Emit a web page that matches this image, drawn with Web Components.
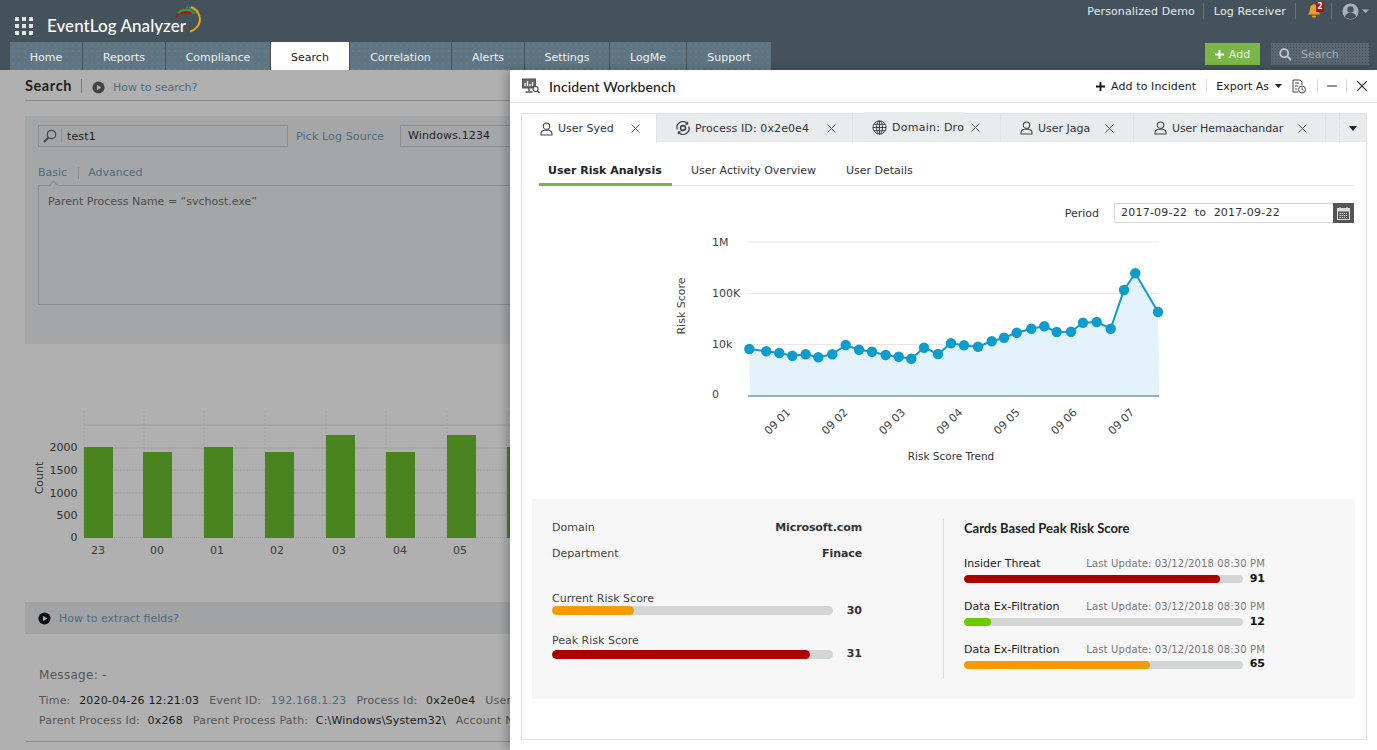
<!DOCTYPE html>
<html><head><meta charset="utf-8"><title>EventLog Analyzer</title>
<style>
html,body{margin:0;padding:0;width:1377px;height:750px;overflow:hidden;background:#b0b0b0;font:11px "DejaVu Sans",sans-serif;color:#333}
</style></head><body>
<x-app>
  <x-topbar></x-topbar>
  <x-search-page></x-search-page>
  <x-drawer>
    <x-tabset slot="tabs">
      <x-doc-tab active icon="user" label="User Syed" style="--w:135px;--pl:18px;--cl:17px"></x-doc-tab>
      <x-doc-tab icon="proc" label="Process ID: 0x2e0e4" style="--w:196px;--pl:19px;--cl:18px;--ls:.1px"></x-doc-tab>
      <x-doc-tab icon="globe" label="Domain: Dro" raised style="--w:148px;--pl:19px;--cl:7px;--ls:.25px"></x-doc-tab>
      <x-doc-tab icon="user" label="User Jaga" style="--w:133px;--pl:19px;--cl:15px"></x-doc-tab>
      <x-doc-tab icon="user" label="User Hemaachandar" style="--w:192px;--pl:20px;--cl:15px;--ls:-.1px"></x-doc-tab>
    </x-tabset>
    <x-subtabs></x-subtabs>
    <x-period></x-period>
    <x-trend></x-trend>
    <x-summary>
      <div slot="left">
        <x-kv k="Domain" v="Microsoft.com"></x-kv>
        <x-kv k="Department" v="Finace"></x-kv>
        <x-score label="Current Risk Score" value="30" pct="29.2" color="#f39c00" style="--top:31px;--gap:0px;--h:9px;--tw:281px;--vw:29px"></x-score>
        <x-score label="Peak Risk Score" value="31" pct="91.8" color="#ad0000" style="--top:19px;--gap:2px;--h:9px;--tw:281px;--vw:29px;--vt:-2px"></x-score>
      </div>
      <div slot="right">
        <x-card-head>Cards Based Peak Risk Score</x-card-head>
        <x-score label="Insider Threat" update="Last Update: 03/12/2018 08:30 PM" value="91" pct="91.6" color="#ad0000" strong style="--top:20px;--gap:4px;--h:8px;--tw:279px;--vw:22px;--vt:-2px"></x-score>
        <x-score label="Data Ex-Filtration" update="Last Update: 03/12/2018 08:30 PM" value="12" pct="9.7" color="#6bcb00" strong style="--top:17px;--gap:4px;--h:8px;--tw:279px;--vw:22px;--vt:-2px"></x-score>
        <x-score label="Data Ex-Filtration" update="Last Update: 03/12/2018 08:30 PM" value="65" pct="66.6" color="#f39c00" strong style="--top:17px;--gap:4px;--h:8px;--tw:279px;--vw:22px;--vt:-4px"></x-score>
      </div>
    </x-summary>
  </x-drawer>
</x-app>
<script>
function el(name, css, html){
  customElements.define(name, class extends HTMLElement{
    connectedCallback(){
      if(this.shadowRoot) return;
      const r=this.attachShadow({mode:'open'});
      const h=typeof html==='function'?html(this):html;
      r.innerHTML='<style>'+css+'</style>'+h;
    }
  });
}
const ICONS={
 user:'<svg width="13" height="14" viewBox="0 0 13 14" fill="none" stroke="#444" stroke-width="1.1"><circle cx="6.5" cy="4.2" r="3.2"/><path d="M1 13v-1.2c0-2 1.6-3.4 3.6-3.6h3.8c2 .2 3.6 1.6 3.6 3.6V13z"/></svg>',
 proc:'<svg width="14" height="14" viewBox="0 0 14 14" fill="none" stroke="#444" stroke-width="1.2"><path d="M1.4 8.5A5.8 5.8 0 0 1 11.2 2.6M12.6 5.5A5.8 5.8 0 0 1 2.8 11.4"/><path d="M11.6 .8v2.3H9.3M2.4 13.2v-2.3h2.3"/><circle cx="7" cy="7" r="2.4" stroke-width="1.6"/></svg>',
 globe:'<svg width="15" height="15" viewBox="0 0 15 15" fill="none" stroke="#444" stroke-width="1"><circle cx="7.5" cy="7.5" r="6.6"/><ellipse cx="7.5" cy="7.5" rx="3" ry="6.6"/><path d="M7.5 1v13M1 7.5h13M1.9 4.3h11.2M1.9 10.7h11.2"/></svg>'
};
const PLAY=(bg,s)=>`<svg width="${s}" height="${s}" viewBox="0 0 14 14"><circle cx="7" cy="7" r="6.5" fill="${bg}"/><path d="M5.3 4v6L10 7z" fill="#b0b0b0"/></svg>`;

el('x-app',':host{display:block;position:relative;width:1377px;height:750px;overflow:hidden}','<slot></slot>');

el('x-topbar',`
:host{display:block;background:#44525c;height:70px;position:relative;color:#fff}
.top{display:flex;height:42px;box-sizing:border-box;align-items:flex-start}
.grid{display:grid;grid-template-columns:repeat(3,4px);grid-auto-rows:4px;gap:3px;margin:17px 0 0 15px}
.grid i{background:#e3e5e6}
.logo{font:500 17px Lato,sans-serif;margin:13px 0 0 14px;color:#fff;position:relative;line-height:26px;white-space:nowrap;letter-spacing:.05px}
.arc{margin:6px 0 0 -11px;flex:none}
.links{margin-left:auto;display:flex;align-items:center;height:22px;font-size:11px;color:#e6e9ea;padding-right:8px;letter-spacing:.12px}
.links span{white-space:nowrap}
.sep{width:1px;height:16px;background:#66737c;margin:0 10px 0 9px}
.bell{position:relative;width:17px;height:16px;margin:0 -2px 0 1px}
.bell b{position:absolute;left:9px;top:-1px;width:8px;height:10px;background:#b00d0d;color:#fff;font:700 8px/10px "DejaVu Sans",sans-serif;text-align:center}
.row2{display:flex;height:28px;padding-left:10px;gap:1px;align-items:stretch}
.tab{background:#5f7582 radial-gradient(#6c808c 0.6px,transparent .8px) 0 0/6px 6px;color:#eef1f2;font-size:11px;line-height:31px;white-space:nowrap;text-align:center;flex:none}
.tab.on{background:#fff;color:#222}
.btn{margin-left:auto;background:#7ab648;width:55px;height:22px;margin-top:1px;display:flex;align-items:center;justify-content:center;gap:5px;color:#eaf3e0;font-size:11px}
.sb{margin:1px 8px 0 10px;width:98px;height:22px;background:#5a6770 radial-gradient(#46525b .7px,transparent .9px) 0 0/3px 3px;display:flex;align-items:center;color:#a4adb2;font-size:11px;box-sizing:border-box;padding-left:8px;gap:9px}
`,`
<div class="top">
  <div class="grid">${'<i></i>'.repeat(9)}</div>
  <div class="logo">EventLog Analyzer</div>
  <svg class="arc" width="28" height="27" viewBox="0 0 28 27" fill="none">
    <path d="M1 11C4 7 10 5.500 16 7" stroke="#b01010" stroke-width="2"/>
    <path d="M3 7C8 2.500 15 2.500 20 8" stroke="#4c9a2a" stroke-width="1.800"/>
    <path d="M11 1.500C16 1 20 4 23 8" stroke="#2f8fc0" stroke-width="1.600" stroke-dasharray="2 1"/>
    <path d="M16 1C24 4 28 14 22 21C20 23.500 18 25 15 25.500" stroke="#e8a50c" stroke-width="2"/>
  </svg>
  <div class="links">
    <span>Personalized Demo</span><i class="sep" style="margin-left:8px"></i><span>Log Receiver</span><i class="sep"></i>
    <div class="bell"><svg width="14" height="16" viewBox="0 0 14 16"><path d="M7 1.500c3 0 4 2.500 4 5 0 2.500 1 3.500 2.500 5H.5C2 10 3 9 3 6.500s1-5 4-5z" fill="#f0a020"/><rect x="5" y="12.500" width="4" height="2" rx="1" fill="#f0a020"/></svg><b>2</b></div>
    <i class="sep"></i>
    <svg width="27" height="17" viewBox="0 0 27 17"><circle cx="8.500" cy="8.500" r="8" fill="#aab0b4"/><circle cx="8.500" cy="6.500" r="3.200" fill="#44525c"/><path d="M2.800 14c.6-3 3-4.200 5.700-4.200s5.100 1.200 5.700 4.200c-3 2.600-8.400 2.600-11.400 0z" fill="#44525c"/><path d="M20 6.500h7L23.500 10z" fill="#aab0b4"/></svg>
  </div>
</div>
<div class="row2">
  <div class="tab" style="width:72px">Home</div><div class="tab" style="width:82px">Reports</div><div class="tab" style="width:104px">Compliance</div><div class="tab on" style="width:78px">Search</div><div class="tab" style="width:101px">Correlation</div><div class="tab" style="width:72px">Alerts</div><div class="tab" style="width:84px">Settings</div><div class="tab" style="width:76px">LogMe</div><div class="tab" style="width:84px">Support</div>
  <div class="btn"><svg width="9" height="9" viewBox="0 0 9 9"><path d="M3.500 0h2v3.500H9v2H5.500V9h-2V5.500H0v-2h3.500z" fill="#fff"/></svg>Add</div>
  <div class="sb"><svg width="13" height="13" viewBox="0 0 13 13" fill="none" stroke="#c5cbce" stroke-width="1.800"><circle cx="5.200" cy="5.200" r="4"/><path d="M8.200 8.200 12 12"/></svg>Search</div>
</div>`);

const barSvg=(()=>{
  const tops=[447,452,447,452,435,452,435,447], xs=[84,143,204,265,326,386,447,507];
  const labs=['23','00','01','02','03','04','05'];
  let s='<svg width="510" height="170" viewBox="0 400 510 170" style="display:block;margin-left:-25px">';
  [425,448,470,493,515].forEach(y=>s+=`<path d="M84 ${y}H510" stroke="#9c9c9c" stroke-dasharray="${y==425?'none':'2 1'}"/>`);
  [84,144,204,265,326,386,447,507].forEach(x=>s+=`<path d="M${x} 411V537" stroke="#a2a2a2" stroke-dasharray="2 2"/>`);
  s+='<path d="M84 537.500H510" stroke="#999" stroke-dasharray="1 1"/>';
  tops.forEach((t,i)=>s+=`<rect x="${xs[i]}" y="${t}" width="29" height="${538-t}" fill="#4a8421"/>`);
  [['2000',451],['1500',474],['1000',497],['500',519],['0',541]].forEach(a=>s+=`<text x="77.500" y="${a[1]}" text-anchor="end" font-size="11" fill="#2e2e2e" font-family="DejaVu Sans">${a[0]}</text>`);
  s+='<text transform="translate(43 478) rotate(-90)" text-anchor="middle" font-size="11" fill="#3a3a3a" font-family="DejaVu Sans">Count</text>';
  [98,157,217,277,339,400,460].forEach((x,i)=>s+=`<text x="${x}" y="554" text-anchor="middle" font-size="11" fill="#3a3a3a" font-family="DejaVu Sans">${labs[i]}</text>`);
  return s+'</svg>';
})();

el('x-search-page',`
:host{display:block;height:680px;padding:0 0 0 25px;color:#222;overflow:hidden}
a{color:#4c6b7d}
.head{height:31px;box-sizing:border-box;border-bottom:1px solid #8b8b8b;display:flex;align-items:center;padding-top:1px}
.head b{font:700 14.500px Lato,sans-serif;color:#1d1d1d;letter-spacing:.6px;width:47px;white-space:nowrap}
.head i{width:1px;height:14px;background:#777;margin:0 10px 0 9px}
.head svg{margin-top:4px}
.head a{margin:4px 0 0 8px}
.panel{margin-top:15px;background:#a5a6a8;height:228px;box-sizing:border-box;padding:9px 13px;position:relative}
.row{display:flex;height:22px;align-items:center;letter-spacing:.13px}
.input{width:250px;height:22px;box-sizing:border-box;border:1px solid #8c8c8c;display:flex;align-items:center;color:#1d1d1d}
.input svg{margin:0 4px 0 4px}
.input i{width:1px;height:14px;background:#949494;margin-right:5px}
.row a{margin-left:8px;width:104px;white-space:nowrap}
.sel{width:200px;height:22px;box-sizing:border-box;border:1px solid #8c8c8c;padding-left:7px;line-height:20px;color:#1d1d1d}
.sub{display:flex;margin-top:19px;height:14px;line-height:14px;align-items:center}
.sub i{width:1px;height:12px;background:#8c8c8c;margin:0 9px 0 11px}
.area{margin-top:5px;height:120px;box-sizing:border-box;border:1px solid #8c8c8c;padding:9px;color:#4c4c4c;position:relative}
.area::before{content:"";position:absolute;left:11px;top:-4px;width:6px;height:6px;background:#a5a6a8;border:1px solid #8c8c8c;border-right:0;border-bottom:0;transform:rotate(45deg)}
.chart{margin-top:56px}
.how{margin-top:32px;height:32px;background:#a2a3a5;display:flex;align-items:center;padding-left:13px;gap:8px}
.msg{margin-top:34px;margin-left:14px;color:#555;font-size:12px;line-height:15px;letter-spacing:.3px}
.kv{margin-left:14px;white-space:nowrap;color:#555;line-height:14px;letter-spacing:.17px}
.kv b{font-weight:400;color:#1a1a1a;margin:0 10px 0 var(--m)}
.kv a{margin:0 10px 0 6px}
hr{margin:13px 0 0 1px;border:0;border-top:1px solid #8a8a8a}
`,`
<div class="head"><b>Search</b><i></i>${PLAY('#444',13)}<a>How to search?</a></div>
<div class="panel">
  <div class="row">
    <div class="input"><svg width="14" height="14" viewBox="0 0 14 14" fill="none" stroke="#4a4a4a" stroke-width="1.300"><circle cx="8.500" cy="5.500" r="4.200"/><path d="M5.500 8.500 1 13" stroke-width="2"/></svg><i></i>test1</div>
    <a>Pick Log Source</a><div class="sel">Windows.1234</div>
  </div>
  <div class="sub"><a>Basic</a><i></i><a>Advanced</a></div>
  <div class="area">Parent Process Name = “svchost.exe”</div>
</div>
<div class="chart">${barSvg}</div>
<div class="how">${PLAY('#0c0c0c',13)}<a>How to extract fields?</a></div>
<div class="msg">Message: -</div>
<div class="kv" style="margin-top:11px;--m:5px">Time: <b>2020-04-26 12:21:03</b>Event ID: <a>192.168.1.23</a>Process Id: <b>0x2e0e4</b>User Name</div>
<div class="kv" style="margin-top:6px;--m:4px">Parent Process Id: <b>0x268</b>Parent Process Path: <b>C:\\Windows\\System32\\</b>Account Name</div>
<hr>`);

el('x-drawer',`
:host{display:flex;flex-direction:column;position:absolute;left:510px;top:70px;width:867px;height:680px;background:#fff;box-shadow:-4px 0 8px rgba(0,0,0,.22);box-sizing:border-box;color:#333}
.hdr{height:33px;flex:none;box-sizing:border-box;border-bottom:1px solid #e2e2e2;display:flex;align-items:center;padding:0 10px 0 12px;color:#222}
.hdr h1{font:500 14px Lato,sans-serif;margin:0 0 0 9px;color:#222;letter-spacing:.1px}
.r{margin-left:auto;display:flex;align-items:center;font-size:11px}
.s{width:1px;height:14px;background:#ddd;margin:0 10px 0 9px}
.box{margin:10px 10px 10px 11px;border:1px solid #e2e2e2;flex:1;display:flex;flex-direction:column;min-height:0}
.body{padding:0 12px 0 17px;display:block}
`,`
<div class="hdr">
  <svg width="18" height="16" viewBox="0 0 18 16"><rect x=".500" y="1" width="13" height="9" fill="#666" stroke="#555"/><path d="M3 8V5M5.500 8V3M8 8V6M10.500 8V4" stroke="#eee" stroke-width="1.400"/><path d="M7 10v3M3.500 14h7" stroke="#555" stroke-width="1.500"/><circle cx="13.500" cy="11" r="2.500" fill="#fff" stroke="#444" stroke-width="1.100"/><path d="M15.300 12.800 17.500 15" stroke="#444" stroke-width="1.300"/></svg>
  <h1>Incident Workbench</h1>
  <div class="r">
    <svg width="9" height="9" viewBox="0 0 9 9" style="margin-right:6px"><path d="M3.600 0h1.800v3.600H9v1.800H5.400V9H3.600V5.400H0V3.600h3.600z" fill="#111"/></svg><span style="letter-spacing:.1px">Add to Incident</span>
    <i class="s" style="margin:0 9px 0 10px"></i>Export As
    <svg width="7" height="4" viewBox="0 0 7 4" style="margin:0 10px 0 6px"><path d="M0 0h7L3.500 4z" fill="#222"/></svg>
    <svg width="14" height="15" viewBox="0 0 14 15" fill="none" stroke="#444" stroke-width="1"><path d="M6 13H1V1h7l2 2v3"/><path d="M3 4h4M3 7h3M3 10h2"/><circle cx="10" cy="10.500" r="3.500"/><path d="M10 8.500v2l1.500 1"/></svg>
    <i class="s" style="margin:0 9px 0 11px"></i>
    <svg width="10" height="2" viewBox="0 0 10 2"><path d="M0 1h10" stroke="#222"/></svg>
    <i class="s"></i>
    <svg width="10" height="10" viewBox="0 0 10 10"><path d="M.300.300l9.400 9.400M9.700.300.300 9.700" stroke="#222" stroke-width="1.100"/></svg>
  </div>
</div>
<div class="box"><slot name="tabs"></slot><div class="body"><slot></slot></div></div>`);

el('x-tabset',`
:host{display:flex;height:28px;flex:none;background:#e9eced;position:relative}
.more{position:absolute;right:0;top:0;width:27px;height:28px;display:flex;align-items:center;justify-content:center;border-left:1px dotted #d4d8da;box-sizing:border-box}
`,`<slot></slot><div class="more"><svg width="8" height="5" viewBox="0 0 8 5"><path d="M0 0h8L4 5z" fill="#222"/></svg></div>`);

el('x-doc-tab',`
:host{display:flex;align-items:center;flex:none;width:var(--w);box-sizing:border-box;padding-left:var(--pl);border-right:1px solid #dfe3e4;font-size:11px;color:#333;position:relative;white-space:nowrap;letter-spacing:var(--ls,0)}
:host([active]){background:#fff;border-right:1px solid #e2e2e2;height:29px;z-index:1}
:host([raised]){padding-bottom:2px}
:host([raised])::before{content:"";position:absolute;left:10px;top:-2px;width:102px;height:2px;background:#e9eced;border-radius:2px 2px 0 0}
svg.ic{flex:none;display:block;margin-right:5px}
span{display:block}
.x{margin-left:var(--cl);flex:none}
`,t=>`<span style="display:contents">${ICONS[t.getAttribute('icon')].replace('<svg','<svg class="ic"')}</span><span>${t.getAttribute('label')}</span><svg class="x" width="9" height="9" viewBox="0 0 9 9"><path d="M.500.500l8 8M8.500.500l-8 8" stroke="#555"/></svg>`);

el('x-subtabs',`
:host{display:flex;height:44px;box-sizing:border-box;border-bottom:1px solid #e6e6e6;align-items:flex-end;font-size:11px;color:#333}
div{padding:0 0 5px;line-height:14px;white-space:nowrap;margin-bottom:-1px;border-bottom:3px solid transparent}
.on{font-weight:700;color:#222;border-bottom-color:#7ab648;padding:0 10px 5px 9px;width:114px}
`,`<div class="on">User Risk Analysis</div><div style="margin-left:19px">User Activity Overview</div><div style="margin-left:30px">User Details</div>`);

el('x-period',`
:host{display:flex;justify-content:flex-end;align-items:center;margin-top:17px;height:20px;font-size:11px;color:#333}
.d{margin-left:15px;width:219px;height:20px;box-sizing:border-box;border:1px solid #d6d6d6;border-right:0;padding-left:6px;line-height:18px;color:#333;white-space:pre;letter-spacing:.23px}
.c{width:21px;height:20px;background:#555;display:flex;align-items:center;justify-content:center}
`,`Period<div class="d">2017-09-22  to  2017-09-22</div><div class="c"><svg width="13" height="13" viewBox="0 0 13 13"><rect x=".500" y="1.500" width="12" height="11" fill="none" stroke="#ddd"/><path d="M1 2h11v2.500H1z" fill="#ddd"/><path d="M3 0v3M10 0v3" stroke="#ddd" stroke-width="1.200"/><path d="M2.500 6.500h8M2.500 8.500h8M2.500 10.500h8" stroke="#ddd" stroke-dasharray="1.300 .8"/></svg></div>`);

const trendSvg=(()=>{
 const z=[[268,372],[319,379],[358,384],[397,392],[437,388],[475,397],[517,388],[557,360],[597,374],[636,380],[677,390],[716,395],[754,401],[792,368],[834,387],[873,355],[912,361],[954,365],[995,349],[1032,338],[1070,323],[1114,311],[1153,304],[1190,321],[1233,320],[1269,293],[1310,291],[1352,311],[1392,195],[1426,145],[1494,261]];
 const p=z.map(a=>[(a[0]/3).toFixed(1),(a[1]/3).toFixed(1)]);
 const line=p.map(a=>a.join(',')).join(' ');
 const f='font-family="DejaVu Sans" font-size="11" fill="#444"';
 let s='<svg width="520" height="240" viewBox="0 0 520 240" style="display:block">';
 [17,68.500,119.500].forEach(y=>s+=`<path d="M88 ${y}H499" stroke="#e6e6e6"/>`);
 s+=`<polygon points="90,171 ${line} 499.500,171" fill="#e4f3fb"/>`;
 s+='<path d="M88 171H499" stroke="#7d97a3" stroke-width="1.500"/>';
 s+=`<polyline points="${line}" fill="none" stroke="#0e9ccf" stroke-width="2"/>`;
 p.forEach(a=>s+=`<circle cx="${a[0]}" cy="${a[1]}" r="5.200" fill="#0e9ccf"/>`);
 [['1M',21],['100K',72],['10k',123],['0',173]].forEach(a=>s+=`<text x="52" y="${a[1]}" ${f}>${a[0]}</text>`);
 s+=`<text transform="translate(25 81) rotate(-90)" text-anchor="middle" ${f} fill="#333">Risk Score</text>`;
 ['09 01','09 02','09 03','09 04','09 05','09 06','09 07'].forEach((t,i)=>{const x=118+i*57.300;s+=`<text transform="translate(${x} 197) rotate(-45)" text-anchor="middle" dominant-baseline="middle" ${f}>${t}</text>`;});
 s+=`<text x="291" y="235" text-anchor="middle" font-family="DejaVu Sans" font-size="10.500" fill="#333">Risk Score Trend</text>`;
 return s+'</svg>';
})();
el('x-trend',':host{display:block;margin:2px 0 0 121px}',trendSvg);

el('x-summary',`
:host{display:flex;margin:34px 0 0 -7px;width:823px;height:200px;background:#f7f7f7;box-sizing:border-box;padding:20px 0 20px 20px}
.l{width:392px;box-sizing:border-box;border-right:1px solid #dedede;padding-right:81px}
.r{padding-left:20px;width:302px}
`,`<div class="l"><slot name="left"></slot></div><div class="r"><slot name="right"></slot></div>`);

el('x-kv',`
:host{display:flex;justify-content:space-between;box-sizing:border-box;padding-top:1px;height:16px;line-height:16px;margin-bottom:10px;font-size:11px;color:#444}
b{color:#333;letter-spacing:-.1px}
`,t=>`<span>${t.getAttribute('k')}</span><b>${t.getAttribute('v')}</b>`);

el('x-card-head',`:host{display:block;font:700 13px/18px Lato,sans-serif;color:#222;}`,'<slot></slot>');

el('x-score',`
:host{display:block;margin-top:var(--top)}
.t{display:flex;justify-content:space-between;height:14px;line-height:14px;font-size:11px;color:#444;white-space:nowrap}
:host([strong]) .t{color:#222}
.u{font-size:10px;color:#777;letter-spacing:.14px;margin-right:1px}
.b{display:flex;margin-top:var(--gap);height:var(--h);align-items:center}
.tr{width:var(--tw);height:100%;background:#d4d6d6;border-radius:5px;overflow:hidden;flex:none}
.f{height:100%;border-radius:5px}
.v{width:var(--vw);flex:none;text-align:right;font-weight:700;color:#333;font-size:11px;margin-top:var(--vt,0)}
:host([strong]) .v{color:#111}
`,t=>`<div class="t"><span>${t.getAttribute('label')}</span>${t.getAttribute('update')?`<span class="u">${t.getAttribute('update')}</span>`:''}</div><div class="b"><div class="tr"><div class="f" style="width:${t.getAttribute('pct')}%;background:${t.getAttribute('color')}"></div></div><div class="v">${t.getAttribute('value')}</div></div>`);
</script>
</body></html>
